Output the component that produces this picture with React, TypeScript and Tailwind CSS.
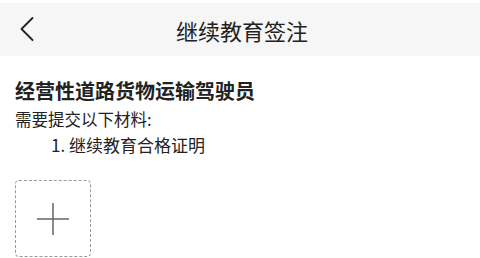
export default function App() {
  return (
    <div className="h-[258px] w-[480px] overflow-hidden bg-white font-['Noto_Sans_CJK_SC','Noto_Sans',sans-serif] text-[#222]">
      <div className="pt-[3px]">
        <div className="relative flex h-[53px] items-center justify-center bg-[#f6f6f6]">
          <svg className="absolute left-[19px] top-[13px]" width="16" height="26" viewBox="0 0 16 26" fill="none">
            <path d="M13.5 2 L2.5 13 L13.5 24" stroke="#222" strokeWidth="1.8" strokeLinecap="round" strokeLinejoin="round" />
          </svg>
          <h1 className="ml-[4px] text-[22px] font-normal leading-none text-[#222]">继续教育签注</h1>
        </div>
      </div>
      <div className="px-[15px] pt-[23px]">
        <h2 className="text-[20px] font-bold leading-[24px]">经营性道路货物运输驾驶员</h2>
        <p className="mt-[3px] text-[16.5px] leading-[26px]">需要提交以下材料:</p>
        <p className="pl-[36px] text-[17px] leading-[26px]">1. 继续教育合格证明</p>
        <div className="mt-[22px] flex h-[77px] w-[76px] items-center justify-center rounded-[4px] border border-dashed border-[#999]">
          <svg width="32" height="32" viewBox="0 0 32 32">
            <path d="M16 0 V32 M0 16 H32" stroke="#666" strokeWidth="1.5" />
          </svg>
        </div>
      </div>
    </div>
  );
}
